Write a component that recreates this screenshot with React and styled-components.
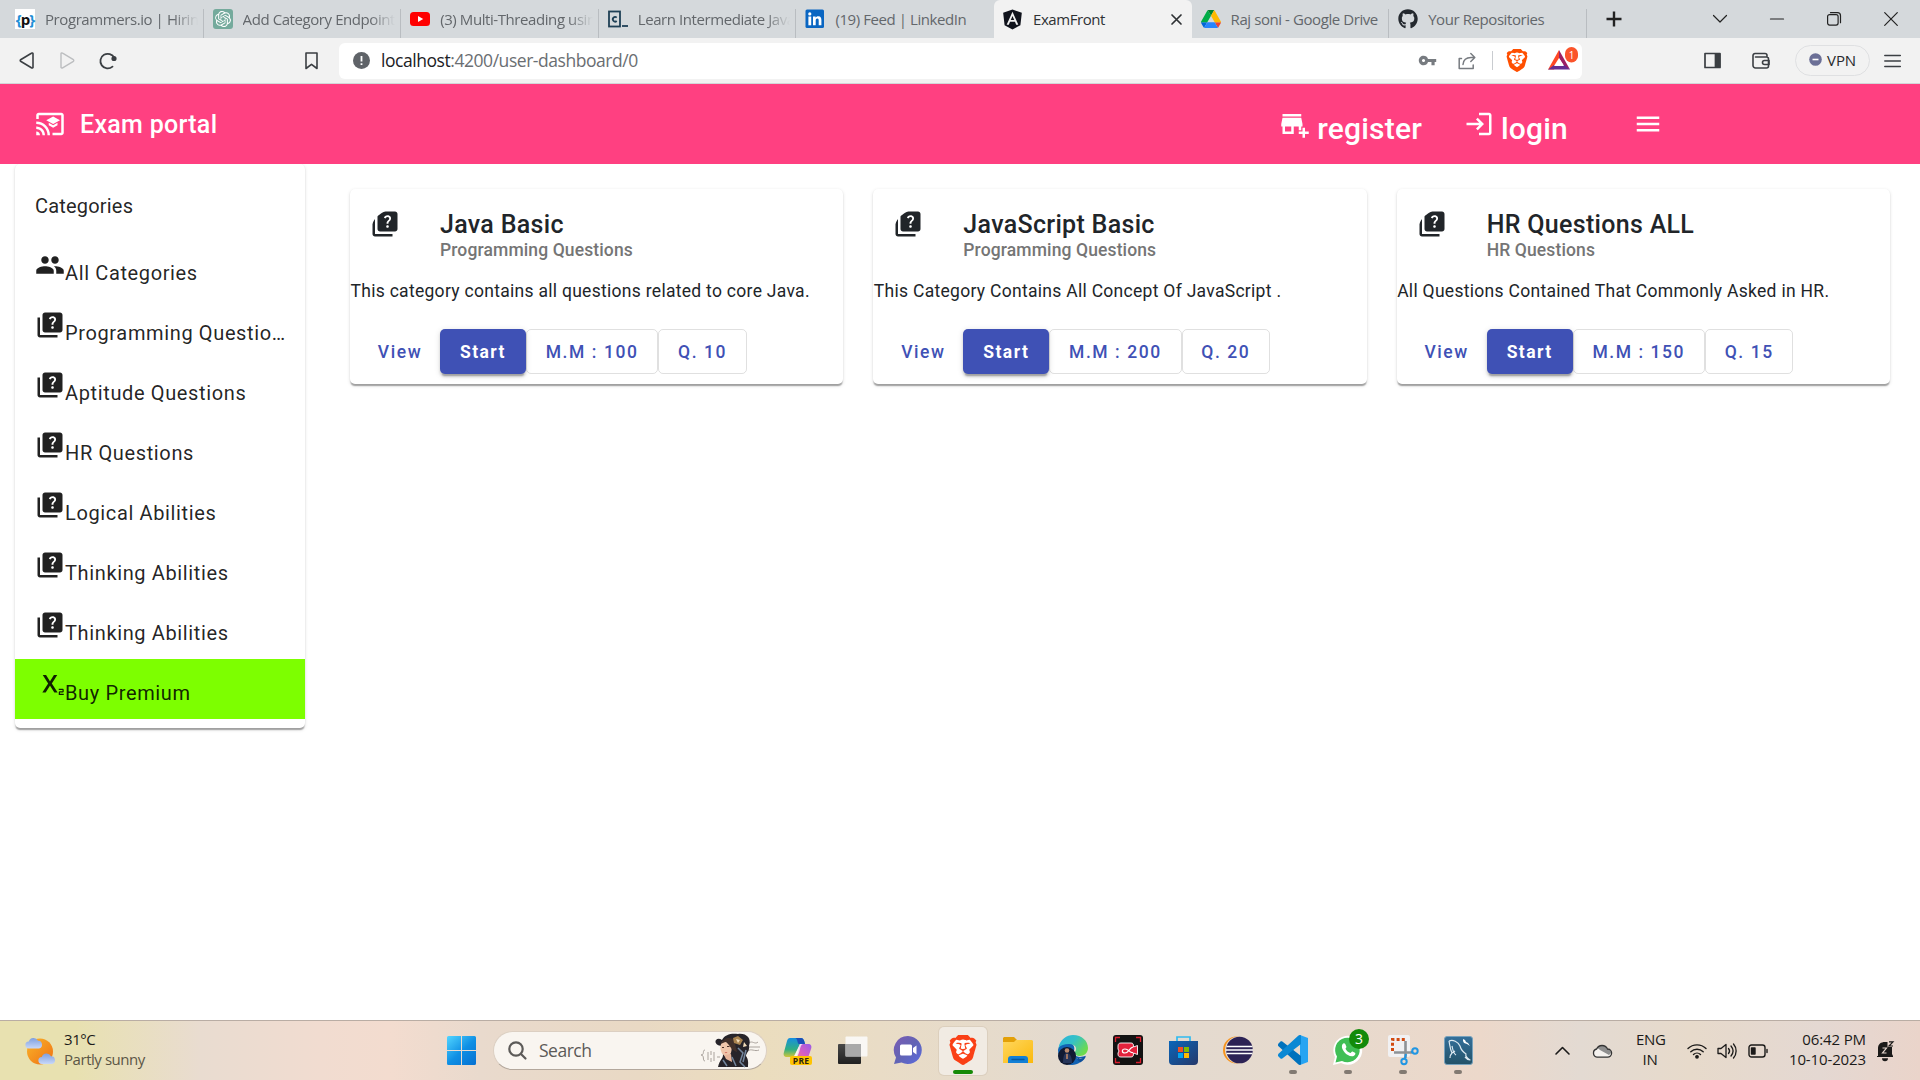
import React from "react";
import styled, { createGlobalStyle } from "styled-components";
import {
  MdCastForEducation,
  MdPeople,
  MdQuiz,
  MdSubscript,
  MdAddBusiness,
  MdLogin,
  MdMenu,
  MdVpnKey,
} from "react-icons/md";
import { FaGithub, FaAngular } from "react-icons/fa";
import { SiBrave, SiOpenai } from "react-icons/si";

const GlobalStyle = createGlobalStyle`
  * { box-sizing: border-box; }
  html, body { margin: 0; padding: 0; overflow: hidden; background: #fff; }
  svg { display: block; flex: none; overflow: visible; }
  button { font: inherit; color: inherit; border: 0; padding: 0; background: none; }
`;

const systemFont = `"Open Sans", "Noto Sans", sans-serif`;

const Screen = styled.div`
  width: 1920px;
  height: 1080px;
  display: flex;
  flex-direction: column;
  overflow: hidden;
  background: #fff;
  font-family: Roboto, "Liberation Sans", sans-serif;
`;

/* ---------- browser chrome ---------- */

const TabStrip = styled.div`
  height: 38px;
  flex: none;
  display: flex;
  padding-left: 6px;
  background: #d5d9dc;
  font-family: ${systemFont};
  font-size: 15px;
  letter-spacing: -0.42px;
  color: #63676b;
`;

const Tab = styled.div`
  width: 197.6px;
  flex: none;
  display: flex;
  align-items: center;
  gap: 10px;
  padding: 0 ${(p) => (p.$active ? 10 : 3)}px 0 9px;
  color: ${(p) => (p.$active ? "#2f3235" : "inherit")};
  background: ${(p) => (p.$active ? "#f2f2f2" : "transparent")};
  border-radius: 6px 6px 0 0;
  background-image: ${(p) =>
    p.$line ? "linear-gradient(#b9bdc1, #b9bdc1)" : "none"};
  background-size: 1px 29px;
  background-position: right bottom;
  background-repeat: no-repeat;
`;

const Favicon = styled.div`
  width: 20px;
  height: 20px;
  flex: none;
  display: flex;
  align-items: center;
  justify-content: center;
  border-radius: ${(p) => p.$radius || 0}px;
  background: ${(p) => p.$bg || "transparent"};
  color: ${(p) => p.$color || "inherit"};
`;

const ProgrammersMark = styled.span`
  font: 700 15px/20px "Open Sans", sans-serif;
  letter-spacing: -1px;
  color: #111;
  b { color: #1f8fd6; font-weight: 700; }
`;

const TabTitle = styled.span`
  flex: 1;
  min-width: 0;
  overflow: hidden;
  white-space: nowrap;
  line-height: 22px;
  padding-bottom: 1px;
  ${(p) =>
    p.$fade && "mask-image: linear-gradient(to left, transparent 3px, #000 28px);"}
`;

const WindowControls = styled.div`
  flex: 1;
  display: flex;
  align-items: center;
  justify-content: space-between;
  padding: 0 22px 0 19px;
  color: #222;
`;

const ControlGroup = styled.div`
  display: flex;
  align-items: center;
  gap: 43px;
`;

const Toolbar = styled.div`
  height: 46px;
  flex: none;
  display: flex;
  align-items: center;
  padding: 0 19px 0 19px;
  background: #f2f2f2;
  border-bottom: 1px solid #d3d6d9;
  font-family: ${systemFont};
  color: #3b3f43;
`;

const NavButtons = styled.div`
  width: 320px;
  display: flex;
  align-items: center;
  gap: 24px;
`;

const BookmarkButton = styled.button`
  margin-left: auto;
  margin-right: 21px;
`;

const AddressBar = styled.div`
  width: 1243px;
  height: 36px;
  display: flex;
  align-items: center;
  padding: 0 4px 0 14px;
  border-radius: 6px;
  background: #fff;
`;

const Url = styled.span`
  margin-left: 11px;
  padding-bottom: 2px;
  font-size: 17.5px;
  letter-spacing: -0.45px;
  line-height: 24px;
  color: #6a6e72;
  b { font-weight: 400; color: #202124; }
`;

const AddressActions = styled.div`
  margin-left: auto;
  display: flex;
  align-items: center;
`;

const AddressButton = styled.button`
  margin-left: ${(p) => p.$gap || 0}px;
  color: #777b80;
`;

const AddressDivider = styled.div`
  width: 1px;
  height: 19px;
  margin: 0 14px 0 16px;
  background: #c9ccd0;
`;

const ToolbarRight = styled.div`
  margin-left: auto;
  display: flex;
  align-items: center;
`;

const ToolButton = styled.button`
  margin-right: ${(p) => p.$after}px;
`;

const VpnPill = styled.button`
  width: 75px;
  height: 31px;
  display: flex;
  align-items: center;
  justify-content: center;
  gap: 5px;
  margin-right: 14px;
  padding-bottom: 2px;
  border: 1px solid #dfe0e2;
  border-radius: 16px;
  font-size: 15px;
  letter-spacing: -0.15px;
  color: #27292c;
`;

/* ---------- app ---------- */

const AppBar = styled.header`
  height: 80px;
  flex: none;
  display: flex;
  align-items: center;
  padding: 0 257px 0 35px;
  background: #ff4081;
  color: #fff;
`;

const Brand = styled.h1`
  margin: 0 0 0 15px;
  padding-top: 2px;
  font-size: 25px;
  font-weight: 500;
  line-height: 40px;
  letter-spacing: 0.3px;
`;

const NavLinks = styled.nav`
  margin-left: auto;
  display: flex;
  align-items: center;
`;

const NavLink = styled.a`
  display: flex;
  align-items: flex-start;
  gap: ${(p) => p.$gap}px;
  margin-right: ${(p) => p.$after}px;
  padding-top: 8px;
  font-size: 30px;
  font-weight: 500;
  line-height: 38px;
  letter-spacing: 0.2px;
  span { padding-top: 1px; }
`;

const Body = styled.main`
  flex: 1;
  min-height: 0;
  display: flex;
  align-items: flex-start;
  padding: 0 30px 0 15px;
`;

const elevation = `0 2.5px 1.25px -1.25px rgba(0,0,0,.2), 0 1.25px 1.25px 0 rgba(0,0,0,.14), 0 1.25px 3.75px 0 rgba(0,0,0,.12)`;

const Sidebar = styled.aside`
  width: 290px;
  height: 564px;
  flex: none;
  padding-top: 15px;
  border-radius: 5px;
  background: #fff;
  box-shadow: ${elevation};
  clip-path: inset(0 -8px -8px -8px);
  color: rgba(0, 0, 0, 0.87);
`;

const SidebarTitle = styled.h2`
  height: 60px;
  margin: 0;
  padding: 12px 20px 0;
  font-size: 20px;
  font-weight: 400;
  line-height: 30px;
  letter-spacing: 0.19px;
`;

const SidebarItem = styled.a`
  height: 60px;
  display: flex;
  padding: 11px 16px 0 20px;
  background: ${(p) => (p.$premium ? "#7dff00" : "transparent")};
`;

const SidebarLabel = styled.span`
  min-width: 0;
  overflow: hidden;
  text-overflow: ellipsis;
  white-space: nowrap;
  padding-top: 8px;
  font-size: 20px;
  line-height: 30px;
  letter-spacing: 0.63px;
`;

const CardGrid = styled.section`
  flex: 1;
  display: grid;
  grid-template-columns: repeat(3, 1fr);
  gap: 30px;
  margin: 25px 0 0 45px;
`;

const Card = styled.article`
  height: 195px;
  display: flex;
  flex-direction: column;
  border-radius: 5px;
  background: #fff;
  box-shadow: ${elevation};
  color: #212529;
`;

const CardHeader = styled.div`
  display: flex;
  gap: 20px;
  padding: 20px 20px 0;
`;

const Avatar = styled.div`
  width: 50px;
  height: 50px;
  flex: none;
  border-radius: 50%;
  overflow: hidden;
`;

const CardTitle = styled.h3`
  margin: 1px 0 0;
  font-size: 25px;
  font-weight: 500;
  line-height: 30px;
  letter-spacing: 0.31px;
`;

const CardSubtitle = styled.div`
  font-size: 17.5px;
  font-weight: 500;
  line-height: 21px;
  letter-spacing: 0.12px;
  color: #757575;
`;

const CardText = styled.p`
  margin: 16px 0 0;
  font-size: 17.5px;
  line-height: 28px;
  letter-spacing: 0.29px;
  padding-left: 0.5px;
`;

const CardActions = styled.div`
  display: flex;
  margin-top: auto;
  padding: 0 10px 10px;
`;

const ActionButton = styled.button`
  height: 45px;
  min-width: 80px;
  padding: 2px ${(p) => (p.$variant === "text" ? 10 : p.$variant === "raised" ? 20 : 18.8)}px 0;
  font-size: 17.5px;
  font-weight: 500;
  line-height: 43px;
  letter-spacing: 1.5625px;
  border-radius: 5px;
  white-space: nowrap;
  color: ${(p) => (p.$variant === "raised" ? "#fff" : "#3f51b5")};
  background: ${(p) => (p.$variant === "raised" ? "#3f51b5" : "transparent")};
  ${(p) =>
    p.$variant === "outlined" &&
    "border: 1px solid rgba(0,0,0,.12); line-height: 41px;"}
  ${(p) =>
    p.$variant === "raised" &&
    "font-weight: 700; letter-spacing: 1.42px; box-shadow: 0 3.75px 1.25px -2.5px rgba(0,0,0,.2), 0 2.5px 2.5px 0 rgba(0,0,0,.14), 0 1.25px 6.25px 0 rgba(0,0,0,.12);"}
`;

/* ---------- taskbar ---------- */

const Taskbar = styled.footer`
  height: 60px;
  flex: none;
  display: flex;
  align-items: center;
  padding: 0 26px 0 25px;
  border-top: 1px solid #b9ada4;
  background: linear-gradient(
    90deg,
    #e8e1b0 0,
    #e8e1b0 75px,
    #e9dcd0 200px,
    #f1dcd0 320px,
    #f3dccf 390px,
    #e9dacd 480px,
    #e9d9c4 640px,
    #ebddbe 760px,
    #e9dcc6 880px,
    #e3dad0 1090px,
    #e6dace 1300px,
    #ecd8ca 1480px,
    #e3dad2 1580px,
    #e7dacb 1690px,
    #e4d8d2 1820px,
    #ead4ca 1920px
  );
  font-family: ${systemFont};
  font-size: 15px;
  line-height: 20px;
  letter-spacing: -0.45px;
  color: #1b1a19;
`;

const Weather = styled.div`
  width: 422px;
  flex: none;
  display: flex;
  align-items: center;
  gap: 8px;
`;

const WeatherText = styled.div`
  padding-bottom: 4px;
  color: #5b5646;
  b { display: block; font-weight: 400; color: #1b1a19; }
`;

const SearchBox = styled.div`
  width: 274px;
  height: 39px;
  flex: none;
  display: flex;
  align-items: center;
  margin: 0 7px 0 17px;
  padding: 0 4px 0 14px;
  border: 1px solid #dccfc2;
  border-bottom-color: #b3a79c;
  border-radius: 20px;
  background: #f9f5f0;
  font-size: 17.5px;
  color: #5c5a58;
  letter-spacing: -0.5px;
  span { margin-left: 12px; padding-bottom: 1px; }
  > svg:last-child { margin-left: auto; }
`;

const AppRow = styled.div`
  display: flex;
  align-items: center;
  gap: 7px;
`;

const AppTile = styled.div`
  width: 48px;
  height: 48px;
  flex: none;
  display: grid;
  grid-template-rows: 39px 5px;
  align-content: end;
  justify-items: center;
  align-items: center;
  border-radius: 5px;
  background: ${(p) => (p.$active ? "#f1ebe3" : "transparent")};
  box-shadow: ${(p) => (p.$active ? "0 0 0 1px rgba(160,140,120,.15)" : "none")};
`;

const IconFrame = styled.div`
  position: relative;
  display: flex;
`;

const RunMark = styled.div`
  width: ${(p) => (p.$active ? 20 : 8)}px;
  height: 4px;
  border-radius: 2px;
  background: ${(p) => (p.$active ? "#168a06" : "#827a72")};
`;

const CountBadge = styled.span`
  position: absolute;
  top: -6px;
  right: -6px;
  width: 20px;
  height: 20px;
  border-radius: 50%;
  background: #128a0a;
  color: #fff;
  font-size: 14px;
  line-height: 20px;
  text-align: center;
  letter-spacing: 0;
`;

const PreBadge = styled.span`
  position: absolute;
  left: 7px;
  bottom: 0;
  width: 22px;
  height: 9px;
  border-radius: 2px;
  background: #ffc400;
  color: #2b2410;
  font: 700 8.5px/9px "Open Sans", sans-serif;
  letter-spacing: 0.2px;
  text-align: center;
`;

const Tray = styled.div`
  margin-left: auto;
  display: flex;
  align-items: center;
`;

const TrayText = styled.div`
  width: ${(p) => p.$w}px;
  margin-right: ${(p) => p.$after}px;
  padding-bottom: 4px;
  text-align: ${(p) => p.$align};
  white-space: nowrap;
  letter-spacing: ${(p) => p.$track}px;
`;

const TrayIcon = styled.div`
  margin-right: ${(p) => p.$after}px;
`;

/* ---------- drawings ---------- */

const Stroke = ({ w, h, children, sw = 1.6, ...rest }) => (
  <svg
    width={w}
    height={h}
    viewBox={`0 0 ${w} ${h}`}
    fill="none"
    stroke="currentColor"
    strokeWidth={sw}
    strokeLinecap="round"
    strokeLinejoin="round"
    {...rest}
  >
    {children}
  </svg>
);

const YoutubeIcon = () => (
  <svg width="20" height="20" viewBox="0 0 20 20">
    <rect x="0" y="3" width="20" height="14" rx="3.5" fill="#f00" />
    <path d="M8 7l5.2 3L8 13z" fill="#fff" />
  </svg>
);

const CodecademyIcon = () => (
  <svg width="20" height="20" viewBox="0 0 20 20" fill="none" stroke="#1f4056">
    <rect x="1" y="2.5" width="11" height="15" strokeWidth="1.8" />
    <path d="M8.7 8.6A2.3 2.3 0 1 0 8.7 12" strokeWidth="1.8" />
    <path d="M14 17h6" strokeWidth="1.8" />
  </svg>
);

const LinkedinIcon = () => (
  <svg width="20" height="20" viewBox="0 0 20 20">
    <rect x="0.5" y="0.5" width="18.5" height="18.5" rx="1.5" fill="#0a66c2" />
    <g fill="#fff">
      <circle cx="4.8" cy="4.9" r="1.6" />
      <rect x="3.4" y="7.5" width="2.8" height="8.8" />
      <path d="M8 7.5h2.6v1.2c.5-.8 1.4-1.4 2.7-1.4 2.6 0 3.1 1.7 3.1 4v5h-2.7v-4.500c0-1.100 0-2.200-1.400-2.200s-1.600 1.100-1.600 2.200v4.500H8z" />
    </g>
  </svg>
);

const DriveIcon = () => (
  <svg width="20" height="18" viewBox="0 0 87.3 78">
    <path d="m6.6 66.85 3.85 6.65c.8 1.400 1.950 2.500 3.300 3.300l13.750-23.800h-27.500c0 1.550.4 3.100 1.200 4.500z" fill="#0066da" />
    <path d="m43.650 25-13.750-23.800c-1.350.8-2.500 1.900-3.300 3.300l-25.400 44a9.060 9.060 0 0 0 -1.200 4.500h27.500z" fill="#00ac47" />
    <path d="m73.550 76.800c1.350-.8 2.500-1.900 3.300-3.300l1.600-2.750 7.650-13.250c.8-1.400 1.200-2.950 1.200-4.500h-27.500l5.850 11.500z" fill="#ea4335" />
    <path d="m43.650 25 13.750-23.800c-1.350-.8-2.900-1.200-4.500-1.200h-18.500c-1.600 0-3.150.45-4.500 1.200z" fill="#00832d" />
    <path d="m59.800 53h-32.300l-13.750 23.800c1.350.8 2.900 1.200 4.500 1.200h50.800c1.600 0 3.150-.45 4.500-1.200z" fill="#2684fc" />
    <path d="m73.400 26.500-12.700-22c-.8-1.400-1.950-2.500-3.300-3.300l-13.750 23.800 16.150 28h27.450c0-1.550-.4-3.100-1.200-4.500z" fill="#ffba00" />
  </svg>
);

const BatIcon = () => (
  <svg width="30" height="27" viewBox="0 0 30 27">
    <path d="M11 3L0 22.500h6L11.500 12z" fill="#ff4724" />
    <path d="M11 3l11 19.500-5.500-3L11 11z" fill="#9e1f63" />
    <path d="M0 22.500h22l-5.500-4.500H6z" fill="#662d91" />
    <path d="M11 11l5 8H6z" fill="#fff" />
    <rect x="17" y="0" width="13" height="15.500" rx="6.500" fill="#fb542b" />
    <text x="23.500" y="11.500" textAnchor="middle" fontSize="10" fill="#fff" fontFamily="Open Sans, sans-serif">1</text>
  </svg>
);

const BraveMark = ({ w, h, color }) => (
  <svg width={w} height={h} viewBox="2.200 0 19.600 24" preserveAspectRatio="none">
    <path d="M6 4h12l2 5-4 10-4 3-4-3L4 9z" fill="#fff" />
    <SiBrave size={24} color={color} fill={color} x="0" y="0" />
  </svg>
);

const WeatherIcon = () => (
  <svg width="31" height="30" viewBox="0 0 31 30">
    <defs>
      <linearGradient id="sun" x1="0" y1="0" x2="1" y2="1">
        <stop offset="0" stopColor="#f9b52b" />
        <stop offset="1" stopColor="#f07012" />
      </linearGradient>
      <linearGradient id="puff" x1="0" y1="0" x2="0" y2="1">
        <stop offset="0" stopColor="#7f9fe0" />
        <stop offset="1" stopColor="#c8d8f8" />
      </linearGradient>
    </defs>
    <circle cx="15" cy="15.500" r="13" fill="url(#sun)" />
    <path d="M4 12.500a3.500 3.500 0 0 1-.2-7A5 5 0 0 1 13 4.800a3.900 3.900 0 0 1 1 7.700z" fill="url(#puff)" />
    <path d="M17 28a3.500 3.500 0 0 1-.2-7 5 5 0 0 1 9.200-.7 3.900 3.900 0 0 1 1 7.700z" fill="url(#puff)" />
  </svg>
);

const StartIcon = () => (
  <svg width="29" height="29" viewBox="0 0 29 29">
    <defs>
      <linearGradient id="win" gradientUnits="userSpaceOnUse" x1="0" y1="0" x2="26" y2="29">
        <stop offset="0" stopColor="#52d5ff" />
        <stop offset="0.550" stopColor="#0f8fe4" />
        <stop offset="1" stopColor="#0673d3" />
      </linearGradient>
    </defs>
    <path fill="url(#win)" d="M1.500 0H14v14H0V1.500A1.500 1.500 0 0 1 1.500 0zM15 0h12.500A1.500 1.500 0 0 1 29 1.500V14H15zM0 15h14v14H1.500A1.500 1.500 0 0 1 0 27.500zM15 15h14v12.500a1.500 1.500 0 0 1-1.500 1.500H15z" />
  </svg>
);

const SearchArt = () => (
  <svg width="62" height="35" viewBox="0 0 62 35">
    <g fill="none" stroke="#aaa39d" strokeWidth="1">
      <path d="M5 17c-3 0 0 5-4 5 4 0 1 6 4 6M8 19v8M11 18v4m0 3v4M14 19v9M17 24h3M49 10c3-3 6 2 9-1M47 14h13M48 18c3-3 7 1 11-1" />
    </g>
    <path d="M18 34c2-8 5-8 5-12l-1-9c-4 0-8-3-6-6 2-2 4-1 6 0 3-6 10-7 16-6 8-1 14 4 11 12 1 5-3 7-3 10 3 4 2 8 2 11z" fill="#27242a" />
    <ellipse cx="26" cy="15.500" rx="5.500" ry="7.800" fill="#efc6ab" transform="rotate(-12 26 15.500)" />
    <path d="M24 22l7-1 1 8-6-3z" fill="#e7b59b" />
    <path d="M21 11c3-7 10-7 13-4l3 12c-5-1-8-8-11-10-2 0-3 1-5 2z" fill="#41302a" />
    <path d="M33 5l5-2 5 4-3 5-6-2z" fill="#a9834f" />
    <path d="M36 6l4 1-2 3zM44 9l3 4-4 1z" fill="#f2dcba" />
    <path d="M38 15l5 5-3 9 5 5M32 24l4 9M46 17l-3 12M23 27l4 6" stroke="#73869e" strokeWidth="1.500" fill="none" />
    <path d="M24.500 19.500l3-.5-1.500 1.300z" fill="#c84f45" />
    <path d="M22 14.500h2M27 13.500h2.500" stroke="#493129" />
  </svg>
);

const CopilotIcon = () => (
  <svg width="30" height="30" viewBox="0 0 30 30">
    <defs>
      <linearGradient id="cpA" x1="0" y1="0" x2="0" y2="1">
        <stop offset="0" stopColor="#168fe0" />
        <stop offset="0.600" stopColor="#2fae83" />
        <stop offset="1" stopColor="#d0c63a" />
      </linearGradient>
      <linearGradient id="cpB" x1="1" y1="0" x2="0" y2="1">
        <stop offset="0" stopColor="#9b5be8" />
        <stop offset="0.500" stopColor="#d65fc3" />
        <stop offset="1" stopColor="#ff8c61" />
      </linearGradient>
    </defs>
    <path d="M7 3h11c2 0 3 2 3.500 4L22 9h-5l-5 10c-.7 2-2 3-4 3H4c-3 0-4-2-3-5L4 6c.5-2 1.500-3 3-3z" fill="url(#cpA)" />
    <path d="M12 3h6c2 0 3 2 3.500 4L22 9h-6c-2 0-1-6-4-6z" fill="#1b4fb9" />
    <path d="M18 9h7c3 0 4 2 3 5l-3 9c-.7 2-2 3-4 3H10c2 0 3-2 4-5l2-9c.5-2 1-3 2-3z" fill="url(#cpB)" />
    <path d="M17 9h3c-3 0-3 9-6 13h-3z" fill="#fff" opacity=".75" />
  </svg>
);

const TaskViewIcon = () => (
  <svg width="30" height="29" viewBox="0 0 30 29">
    <defs>
      <linearGradient id="tv" x1="0" y1="0" x2="0" y2="1">
        <stop offset="0" stopColor="#484848" />
        <stop offset="1" stopColor="#202020" />
      </linearGradient>
    </defs>
    <rect x="0" y="8" width="23" height="20" rx="1" fill="url(#tv)" />
    <rect x="7.500" y="0.500" width="22" height="20" rx="1" fill="#fbfbfb" opacity=".86" />
    <path d="M7.500 8H23v12.500H7.500z" fill="#a9a9a9" />
  </svg>
);

const ChatIcon = () => (
  <svg width="30" height="30" viewBox="0 0 30 30">
    <defs>
      <linearGradient id="chat" x1="0" y1="0" x2="1" y2="1">
        <stop offset="0" stopColor="#7b5bb5" />
        <stop offset="0.500" stopColor="#6264b4" />
        <stop offset="1" stopColor="#5a6be0" />
      </linearGradient>
    </defs>
    <path d="M15 1a14 14 0 1 1-6.500 26.500L1 29l2-6.500A14 14 0 0 1 15 1z" fill="url(#chat)" />
    <rect x="7" y="9.500" width="12" height="11" rx="1.500" fill="#fff" />
    <path d="M20 13l3.500-2.500v9L20 17z" fill="#fff" />
  </svg>
);

const FolderIcon = () => (
  <svg width="30" height="28" viewBox="0 0 30 28">
    <defs>
      <linearGradient id="fold" x1="0" y1="0" x2="1" y2="1">
        <stop offset="0" stopColor="#ffd75e" />
        <stop offset="1" stopColor="#fbb90c" />
      </linearGradient>
    </defs>
    <path d="M1 1h10l3 3-3 4H0V2z" fill="#e3a008" />
    <path d="M0 6h11l2-2h16l1 1v22H0z" fill="url(#fold)" />
    <path d="M5 27v-4a3 3 0 0 1 3-3h14a3 3 0 0 1 3 3v4z" fill="#1280d6" />
    <path d="M9 23.500h12" stroke="#07599f" strokeWidth="1.300" strokeLinecap="round" />
  </svg>
);

const EdgeIcon = () => (
  <svg width="30" height="30" viewBox="0 0 30 30">
    <defs>
      <linearGradient id="edgeA" x1="0" y1="0" x2="1" y2="0.600">
        <stop offset="0" stopColor="#2bb3df" />
        <stop offset="0.500" stopColor="#35c1c6" />
        <stop offset="1" stopColor="#6ddb4c" />
      </linearGradient>
    </defs>
    <path d="M0 15C1 9 6 6 12 8c4 1 5 5 4 8-1 2 1 6 6 6 2 0 4-.500 5.500-1.200C25 26 20 30 14 30 6 30 0 23 0 15z" fill="#1263b5" />
    <path d="M.5 13C2 4 9 0 15 0c9 0 15 6 15 13 0 5-4 8-8 8-4 0-6-2-5-4 3-4 0-8-6-8C6 9 3 10 .5 13z" fill="url(#edgeA)" />
    <path d="M17 22c3 2 8 1 11-1-1 3-3 5-6 6.500z" fill="#0d4f9c" />
    <path d="M17.500 22.500c3 2 6 1.500 7.500 1l-5 0z" fill="#e3dad0" />
    <circle cx="9" cy="21" r="9" fill="#111a33" />
    <path d="M5 28c0-6 1-10 4-10s5 4 5 10z" fill="#26355a" />
    <circle cx="9" cy="15.500" r="2.300" fill="#b98a70" />
    <path d="M8 19h2v5H8z" fill="#9c7463" />
  </svg>
);

const RecorderIcon = () => (
  <svg width="30" height="30" viewBox="0 0 30 30">
    <rect width="30" height="30" rx="3" fill="#121212" />
    <path d="M2.500 7V2.500H7M23 2.500h4.500V7M27.500 23v4.500H23M7 27.500H2.500V23" fill="none" stroke="#d91f2e" strokeWidth="1.300" />
    <path d="M8 8h10c2 0 2.500 1 2.500 4l4-1.500v9L20.500 18c0 3-.500 4-2.500 4H8c-2 0-3-1-3-3v-1l1-2-1-2v-3c0-2 1-3 3-3z" fill="#e3223c" stroke="#fff" strokeWidth=".9" />
    <path d="M20 17.500c-3 1-4-3.500-8-3.500-3.500 0-3.500 4 0 4 4 0 4-5 8-6" fill="none" stroke="#fff" strokeWidth="1.200" />
  </svg>
);

const StoreIcon = () => (
  <svg width="29" height="29" viewBox="0 0 29 29">
    <defs>
      <linearGradient id="store" x1="0" y1="0" x2="1" y2="1">
        <stop offset="0" stopColor="#0a66ba" />
        <stop offset="1" stopColor="#25386a" />
      </linearGradient>
    </defs>
    <path d="M8 5V1h13v4" fill="none" stroke="#30baf0" strokeWidth="1.700" />
    <path d="M0 5h29v20a4 4 0 0 1-4 4H4a4 4 0 0 1-4-4z" fill="url(#store)" />
    <path fill="#f25022" d="M9 11h5v5H9z" />
    <path fill="#7fba00" d="M15 11h5v5h-5z" />
    <path fill="#00a4ef" d="M9 17h5v5H9z" />
    <path fill="#ffb900" d="M15 17h5v5h-5z" />
  </svg>
);

const EclipseIcon = () => (
  <svg width="30" height="28" viewBox="0 0 30 28">
    <circle cx="13.500" cy="14" r="13.500" fill="#f7941e" />
    <circle cx="15.500" cy="14" r="13.500" fill="#e5dad0" />
    <circle cx="16.500" cy="14" r="13.300" fill="#2c2255" />
    <path d="M3.500 10.500h26M3 14h27M3.500 17.500h26" stroke="#fff" strokeWidth="1.700" />
  </svg>
);

const VsCodeIcon = () => (
  <svg width="30" height="30" viewBox="0 0 30 30">
    <path d="M22 0l8 3v24l-8 3z" fill="#27a4f2" />
    <path d="M.5 8.500l2-2c.6-.5 1.300-.4 1.800 0L23 21v8.500c-1 .7-2 .5-2.800-.3L.5 11.300c-.7-.8-.7-2 0-2.800z" fill="#0072bd" />
    <path d="M.5 21.500l2 2c.6.5 1.300.4 1.800 0L23 9V.500c-1-.7-2-.5-2.800.3L.5 18.700c-.7.8-.7 2 0 2.800z" fill="#0a88d4" />
  </svg>
);

const WhatsappIcon = () => (
  <svg width="30" height="30" viewBox="0 0 30 30">
    <path d="M0 30l2-8A14.500 14.500 0 1 1 8 28z" fill="#fff" />
    <path d="M2.500 27.500l1.500-6A12.300 12.300 0 1 1 9 26z" fill="#40bf55" />
    <path d="M9.500 9.300c.7-1.500 2.300-1.500 2.900 0l1 2.400c.3.700-.9 1.600-.9 2.100 1.200 2.200 2.700 3.500 4.800 4.200.8 0 1.300-1.800 2.200-1.500l2.500 1.200c.8.500.3 2.300-1 3.100-3 1.700-7.200-.9-9.300-3.300-1.900-2.300-3.800-5.500-2.200-8.200z" fill="#fff" />
  </svg>
);

const SnipIcon = () => (
  <svg width="30" height="30" viewBox="0 0 30 30">
    <rect x="0" y="0" width="22" height="22" rx="2" fill="#f1f1f3" />
    <path d="M4.500 16V4.500H17" fill="none" stroke="#d24a10" strokeWidth="3" strokeDasharray="3 2.200" />
    <path d="M17.500 6v17M6 17.500h18" stroke="#8e9296" strokeWidth="2.600" />
    <circle cx="16" cy="26.500" r="2.700" fill="none" stroke="#2196e3" strokeWidth="2" />
    <circle cx="27" cy="16" r="2.700" fill="none" stroke="#2196e3" strokeWidth="2" />
    <path d="M17 23l1-4M23 17l2-.5" stroke="#2196e3" strokeWidth="2" />
  </svg>
);

const MysqlIcon = () => (
  <svg width="29" height="29" viewBox="0 0 29 29">
    <defs>
      <linearGradient id="sql" x1="0" y1="0" x2="0" y2="1">
        <stop offset="0" stopColor="#34709b" />
        <stop offset="1" stopColor="#235268" />
      </linearGradient>
    </defs>
    <rect x=".5" y=".5" width="28" height="28" rx="2.500" fill="url(#sql)" stroke="#77a2bd" />
    <path d="M5 5c4-2 9 1 11 5 1 4 3 6 6 8-1 2 1 4 4 6-3 0-4-2-5-3M5 5c1 5 1 8 3 12-2 2-2 4-2 5M8 17l3-2M8 10c1 4 1 7 4 9" fill="none" stroke="#dbe8f0" strokeWidth="1.200" strokeLinejoin="round" />
    <path d="M19 3l2 1 1 2 2 1 2 3-3-2-3-1-1-2z" fill="#fff" />
  </svg>
);

const CloudIcon = () => (
  <svg width="20" height="14" viewBox="0 0 20 14">
    <path d="M5 13.200a4.200 4.200 0 0 1-.4-8.200A6 6 0 0 1 15.500 5a4.100 4.100 0 0 1 0 8.200z" fill="#f5f2ef" />
    <path d="M1 9C3 4 5 3 8 6l9 5 2-2c0-3-2-4-4-4C13 0 6 0 4.600 5 2 5 1 7 1 9z" fill="#8f8f8f" />
    <path d="M5 13.200a4.200 4.200 0 0 1-.4-8.200A6 6 0 0 1 15.500 5a4.100 4.100 0 0 1 0 8.200z" fill="none" stroke="#333" strokeWidth="1.300" />
  </svg>
);

const BellIcon = () => (
  <svg width="17" height="20" viewBox="0 0 17 20" fill="#1b1a19">
    <path d="M1 15V7.500C1 3 4 1 8 1h2.500v5H15v7l1 2v1H0v-1zM5 17.300h6a3 3 0 0 1-6 0z" />
    <path d="M5.500 7h4l-4 5h4" fill="none" stroke="#e6d7cf" strokeWidth="1.200" />
    <path d="M12 .8h4l-4 4.200h4" fill="none" stroke="#1b1a19" strokeWidth="1.200" />
  </svg>
);

/* ---------- data ---------- */

const tabs = [
  {
    title: "Programmers.io | Hiring",
    fade: true,
    line: true,
    bg: "#fff",
    icon: <ProgrammersMark><b>{"{"}</b>p<b>{"}"}</b></ProgrammersMark>,
  },
  { title: "Add Category Endpoint", fade: true, line: true, bg: "#74aa9c", radius: 3, color: "#fff", icon: <SiOpenai size={16} /> },
  { title: "(3) Multi-Threading using", fade: true, line: true, icon: <YoutubeIcon /> },
  { title: "Learn Intermediate Java", fade: true, line: true, icon: <CodecademyIcon /> },
  { title: "(19) Feed | LinkedIn", icon: <LinkedinIcon /> },
  { title: "ExamFront", active: true, color: "#10131c", icon: <FaAngular size={23} /> },
  { title: "Raj soni - Google Drive", line: true, icon: <DriveIcon /> },
  { title: "Your Repositories", line: true, color: "#24292f", icon: <FaGithub size={20} /> },
];

const categories = [
  { label: "All Categories", Icon: MdPeople },
  { label: "Programming Questions", Icon: MdQuiz },
  { label: "Aptitude Questions", Icon: MdQuiz },
  { label: "HR Questions", Icon: MdQuiz },
  { label: "Logical Abilities", Icon: MdQuiz },
  { label: "Thinking Abilities", Icon: MdQuiz },
  { label: "Thinking Abilities", Icon: MdQuiz },
  { label: "Buy Premium", Icon: MdSubscript, premium: true },
];

const quizzes = [
  {
    title: "Java Basic",
    category: "Programming Questions",
    text: "This category contains all questions related to core Java.",
    marks: 100,
    count: 10,
  },
  {
    title: "JavaScript Basic",
    category: "Programming Questions",
    text: "This Category Contains All Concept Of JavaScript .",
    marks: 200,
    count: 20,
  },
  {
    title: "HR Questions ALL",
    category: "HR Questions",
    text: "All Questions Contained That Commonly Asked in HR.",
    marks: 150,
    count: 15,
  },
];

const apps = [
  { icon: <CopilotIcon />, pre: true },
  { icon: <TaskViewIcon /> },
  { icon: <ChatIcon /> },
  { icon: <BraveMark w={26} h={30} color="#fa4016" />, active: true },
  { icon: <FolderIcon /> },
  { icon: <EdgeIcon /> },
  { icon: <RecorderIcon /> },
  { icon: <StoreIcon /> },
  { icon: <EclipseIcon /> },
  { icon: <VsCodeIcon />, running: true },
  { icon: <WhatsappIcon />, running: true, count: 3 },
  { icon: <SnipIcon />, running: true },
  { icon: <MysqlIcon />, running: true },
];

/* ---------- sections ---------- */

const BrowserTabs = () => (
  <TabStrip>
    {tabs.map((t) => (
      <Tab key={t.title} $active={t.active} $line={t.line}>
        <Favicon $bg={t.bg} $radius={t.radius} $color={t.color}>{t.icon}</Favicon>
        <TabTitle $fade={t.fade}>{t.title}</TabTitle>
        {t.active && (
          <Stroke w={11} h={11} sw={1.7}><path d="M1 1l9 9M10 1l-9 9" /></Stroke>
        )}
      </Tab>
    ))}
    <WindowControls>
      <Stroke w={16} h={16} sw={2.400} strokeLinecap="butt"><path d="M8 .5v15M.5 8h15" /></Stroke>
      <ControlGroup>
        <Stroke w={14} h={8} sw={1.200}><path d="M.5.5L7 7 13.500.5" /></Stroke>
        <Stroke w={14} h={2} sw={1.200}><path d="M.5 1h13" /></Stroke>
        <Stroke w={14} h={14} sw={1.200}>
          <rect x=".6" y="2.600" width="10.500" height="10.500" rx="2" />
          <path d="M3.500.7h7a3 3 0 0 1 3 3v7" />
        </Stroke>
        <Stroke w={14} h={14} sw={1.200}><path d="M.7.7l12.600 12.600M13.300.7L.7 13.300" /></Stroke>
      </ControlGroup>
    </WindowControls>
  </TabStrip>
);

const BrowserToolbar = () => (
  <Toolbar>
    <NavButtons>
      <Stroke w={16} h={17} sw={1.600}><path d="M14 1.500v14c-.3.600-1 .7-1.600.300L1.600 9.300c-.5-.4-.5-1.200 0-1.600L12.400 1.200c.6-.4 1.400-.2 1.600.3z" /></Stroke>
      <Stroke w={16} h={17} sw={1.400} color="#bcbec0"><path d="M2 1.500v14c.3.600 1 .7 1.600.300L14.400 9.300c.5-.4.5-1.200 0-1.600L3.600 1.200C3 .8 2.200 1 2 1.500z" /></Stroke>
      <Stroke w={18} h={18} sw={1.800}>
        <path d="M13.500 14.600A7.300 7.300 0 1 1 15.300 6" />
        <circle cx="15" cy="6.500" r="1.700" fill="currentColor" />
      </Stroke>
      <BookmarkButton>
        <Stroke w={13} h={18} sw={1.600}><path d="M1 1h11v15.500l-5.500-4.200L1 16.500z" /></Stroke>
      </BookmarkButton>
    </NavButtons>
    <AddressBar>
      <svg width="17" height="17" viewBox="0 0 17 17">
        <circle cx="8.500" cy="8.500" r="8.500" fill="#5f6368" />
        <path d="M8.500 4v5.500M8.500 11.200v1.800" stroke="#fff" strokeWidth="1.800" />
      </svg>
      <Url><b>localhost</b>:4200/user-dashboard/0</Url>
      <AddressActions>
        <AddressButton><MdVpnKey size={19} /></AddressButton>
        <AddressButton $gap={21}>
          <Stroke w={18} h={18} sw={1.500}>
            <path d="M3.500 6.500H1.200v10h14v-3.500M5 12.500c.4-4.500 3.500-7 8-7h3.500M12.800 1.500l4 4-4 4" />
          </Stroke>
        </AddressButton>
        <AddressDivider />
        <BraveMark w={20} h={23} color="#ff4f00" />
        <AddressButton $gap={21}><BatIcon /></AddressButton>
      </AddressActions>
    </AddressBar>
    <ToolbarRight>
      <ToolButton $after={31}>
        <Stroke w={17} h={17} sw={1.700}>
          <rect x="1" y="1.500" width="15" height="14" />
          <path d="M11.500 2h4v13h-4z" fill="currentColor" />
        </Stroke>
      </ToolButton>
      <ToolButton $after={25}>
        <Stroke w={18} h={17} sw={1.600}>
          <path d="M15 5V3.500A2 2 0 0 0 13 1.500H3A2 2 0 0 0 1 3.500V13.500A2.500 2.500 0 0 0 3.500 16H14.500A2 2 0 0 0 16.500 14V7A2 2 0 0 0 14.500 5H3.500" />
          <path d="M17 8.500h-4.500a2 2 0 0 0 0 4H17z" />
        </Stroke>
      </ToolButton>
      <VpnPill>
        <svg width="13" height="13" viewBox="0 0 13 13">
          <circle cx="6.500" cy="6.500" r="6.300" fill="#6b6f96" />
          <path d="M3.500 6.500h6" stroke="#fff" strokeWidth="1.600" />
        </svg>
        VPN
      </VpnPill>
      <Stroke w={17} h={14} sw={1.500}><path d="M.8 1.500h15.500M.8 7h15.500M.8 12.500h15.500" /></Stroke>
    </ToolbarRight>
  </Toolbar>
);

const QuizCard = ({ quiz }) => (
  <Card>
    <CardHeader>
      <Avatar><MdQuiz size={30} /></Avatar>
      <div>
        <CardTitle>{quiz.title}</CardTitle>
        <CardSubtitle>{quiz.category}</CardSubtitle>
      </div>
    </CardHeader>
    <CardText>{quiz.text}</CardText>
    <CardActions>
      <ActionButton $variant="text">View</ActionButton>
      <ActionButton $variant="raised">Start</ActionButton>
      <ActionButton $variant="outlined">M.M : {quiz.marks}</ActionButton>
      <ActionButton $variant="outlined">Q. {quiz.count}</ActionButton>
    </CardActions>
  </Card>
);

const DesktopTaskbar = () => (
  <Taskbar>
    <Weather>
      <WeatherIcon />
      <WeatherText><b>31°C</b>Partly sunny</WeatherText>
    </Weather>
    <StartIcon />
    <SearchBox>
      <Stroke w={19} h={19} sw={2.200}><circle cx="8" cy="8" r="6.700" /><path d="M13 13l4.500 4.500" /></Stroke>
      <span>Search</span>
      <SearchArt />
    </SearchBox>
    <AppRow>
      {apps.map((a, i) => (
        <AppTile key={i} $active={a.active}>
          <IconFrame>
            {a.icon}
            {a.pre && <PreBadge>PRE</PreBadge>}
            {a.count && <CountBadge>{a.count}</CountBadge>}
          </IconFrame>
          {(a.active || a.running) && <RunMark $active={a.active} />}
        </AppTile>
      ))}
    </AppRow>
    <Tray>
      <TrayIcon $after={22}><Stroke w={15} h={9} sw={1.600}><path d="M1 8l6.500-6.500L14 8" /></Stroke></TrayIcon>
      <TrayIcon $after={24}><CloudIcon /></TrayIcon>
      <TrayText $w={28} $after={23} $align="center" $track={-0.3}>ENG<br />IN</TrayText>
      <TrayIcon $after={10}>
        <Stroke w={20} h={16} sw={1.400}>
          <path d="M1 5.500a13 13 0 0 1 18 0M3.800 8.700a9 9 0 0 1 12.400 0M6.500 11.600a5 5 0 0 1 7 0" />
          <circle cx="10" cy="13.800" r="1.200" fill="currentColor" />
        </Stroke>
      </TrayIcon>
      <TrayIcon $after={11}>
        <Stroke w={20} h={16} sw={1.300}>
          <path d="M1 5.500h3L9 1.500v13l-5-4H1zM11.500 5.500c1.300 1.500 1.300 3.500 0 5M14 3c2.500 3 2.500 7 0 10M16.500 1c3.500 4 3.500 10 0 14" />
        </Stroke>
      </TrayIcon>
      <TrayIcon $after={19}>
        <Stroke w={21} h={14} sw={1.400}>
          <rect x="1" y="1" width="16" height="12" rx="2.500" />
          <path d="M3.500 4h3.500v6H3.500zM19 5.500v3" fill="currentColor" />
        </Stroke>
      </TrayIcon>
      <TrayText $w={78} $after={11} $align="right" $track={-0.12}>06:42 PM<br />10-10-2023</TrayText>
      <BellIcon />
    </Tray>
  </Taskbar>
);

export default function App() {
  return (
    <Screen>
      <GlobalStyle />
      <BrowserTabs />
      <BrowserToolbar />
      <AppBar>
        <MdCastForEducation size={30} />
        <Brand>Exam portal</Brand>
        <NavLinks>
          <NavLink $gap={7} $after={42}><MdAddBusiness size={30} /><span>register</span></NavLink>
          <NavLink $gap={7} $after={65}><MdLogin size={30} /><span>login</span></NavLink>
          <MdMenu size={30} />
        </NavLinks>
      </AppBar>
      <Body>
        <Sidebar>
          <SidebarTitle>Categories</SidebarTitle>
          {categories.map(({ label, Icon, premium }, i) => (
            <SidebarItem key={i} $premium={premium}>
              <Icon size={30} />
              <SidebarLabel>{label}</SidebarLabel>
            </SidebarItem>
          ))}
        </Sidebar>
        <CardGrid>
          {quizzes.map((q) => <QuizCard key={q.title} quiz={q} />)}
        </CardGrid>
      </Body>
      <DesktopTaskbar />
    </Screen>
  );
}
